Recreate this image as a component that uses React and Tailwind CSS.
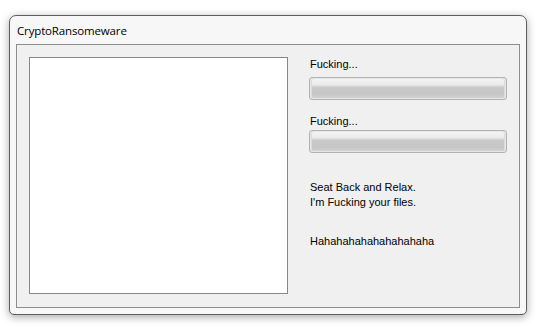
import React from 'react';

function ProgressBar() {
    return (
        <div className="w-[198px] h-[23px] rounded-[3px] border border-[#b2b2b2] p-px bg-[#e6e6e6]">
            <div className="w-full h-full rounded-[2px] bg-[linear-gradient(to_bottom,#f4f4f4_0%,#eaeaea_30%,#c9c9c9_45%,#c6c6c6_80%,#d2d2d2_100%)] shadow-[inset_1px_0_0_#dcdcdc,inset_-1px_0_0_#dcdcdc]" />
        </div>
    );
}

export default function App() {
    return (
        <div className="w-[543px] h-[331px] bg-white pt-[15px] pl-[9px] font-['Liberation_Sans',Arial,sans-serif] text-[12px] text-black">
            <div className="w-[518px] h-[300px] flex flex-col rounded-t-[7px] rounded-b-[5px] border border-[#5f5f5f] bg-[#f7f7f7] shadow-[0_2px_8px_rgba(0,0,0,0.35)] px-[6px] pb-[6px]">
                <div className="h-[28px] flex items-center pl-[1px] pt-[1px] text-[11.5px] font-['Open_Sans',sans-serif] tracking-[-0.15px]">
                    CryptoRansomeware
                </div>
                <div className="flex-1 border border-[#8d8d8d] bg-[#f0f0f0] flex pt-[12px] pl-[12px] gap-[21px]">
                    <div className="w-[259px] h-[237px] bg-white border border-[#828790]" />
                    <div className="flex flex-col leading-[13px] text-[11px] pl-px">
                        <div className="mt-[1px] h-[13px]">Fucking...</div>
                        <div className="mt-[6px] -ml-px"><ProgressBar /></div>
                        <div className="mt-[15px] h-[13px]">Fucking...</div>
                        <div className="mt-[2px] -ml-px"><ProgressBar /></div>
                        <div className="mt-[28px]">Seat Back and Relax.</div>
                        <div className="mt-[2px]">I'm Fucking your files.</div>
                        <div className="mt-[26px]">Hahahahahahahahahaha</div>
                    </div>
                </div>
            </div>
        </div>
    );
}
